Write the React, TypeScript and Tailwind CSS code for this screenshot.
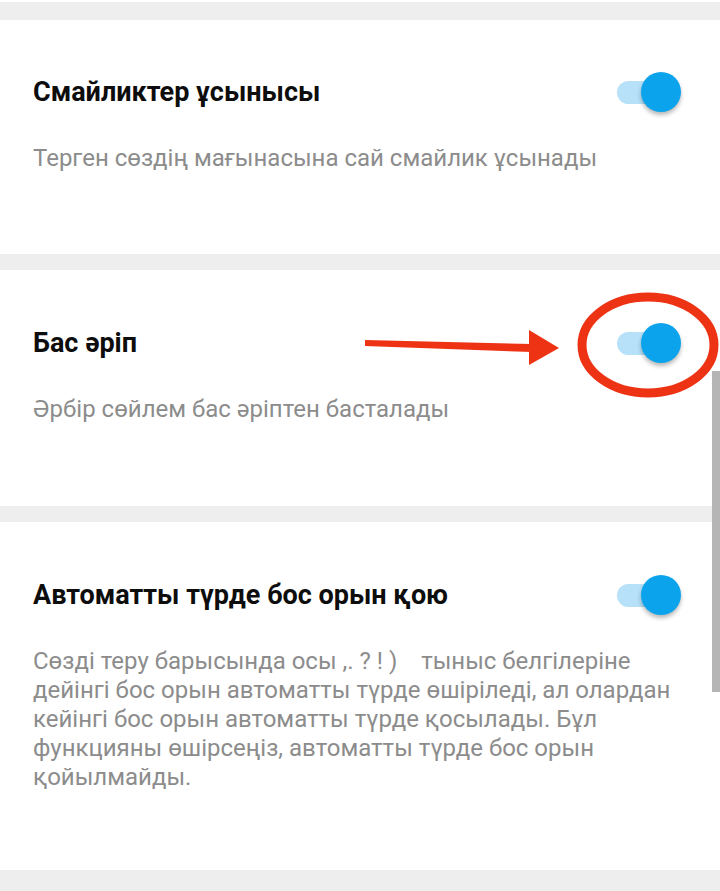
import React from 'react'

interface SettingRowProps {
  title: string;
  description: string[];
  className: string;
}

const Toggle = () => {
  return (
    <div className="relative w-[64px] h-[40px] shrink-0">
      <div className="absolute left-0 top-[9px] w-[48px] h-[23px] rounded-full bg-[#b6e1f9]" />
      <div className="absolute right-0 top-0 w-[40px] h-[40px] rounded-full bg-[#0ba4ec] shadow-[0_3px_4px_rgba(0,0,0,0.28)]" />
    </div>
  )
}

const SettingRow = ({ title, description, className }: SettingRowProps) => {
  return (
    <div className={`bg-white pl-[33px] pr-[39px] ${className}`}>
      <div className="flex items-center justify-between h-[32px]">
        <h2 className="text-[27px] leading-[32px] font-bold text-[#0d0d0d]">{title}</h2>
        <Toggle />
      </div>
      <div className="mt-[36px] text-[24px] leading-[29px] text-[#8c8c8c]">
        {description.map((line, i) => (
          <p key={i} className="whitespace-pre">{line}</p>
        ))}
      </div>
    </div>
  )
}

const App = () => {
  return (
    <div
      className="relative w-[720px] h-[891px] overflow-hidden bg-[#eeeeee] flex flex-col gap-4"
      style={{ fontFamily: 'Roboto, "Noto Sans", sans-serif' }}
    >
      <div className="h-[2px] bg-white -mb-4" />
      <div className="h-[2px]" />
      <SettingRow
        className="pt-[56px] pb-[81px]"
        title="Смайликтер ұсынысы"
        description={['Терген сөздің мағынасына сай смайлик ұсынады']}
      />
      <SettingRow
        className="pt-[57px] pb-[82px]"
        title="Бас әріп"
        description={['Әрбір сөйлем бас әріптен басталады']}
      />
      <SettingRow
        className="pt-[57px] pb-[78px]"
        title="Автоматты түрде бос орын қою"
        description={[
          'Сөзді теру барысында осы ,. ? ! )    тыныс белгілеріне',
          'дейінгі бос орын автоматты түрде өшіріледі, ал олардан',
          'кейінгі бос орын автоматты түрде қосылады. Бұл',
          'функцияны өшірсеңіз, автоматты түрде бос орын',
          'қойылмайды.',
        ]}
      />

      {/* scrollbar */}
      <div className="absolute left-[712px] top-[371px] w-[8px] h-[321px] bg-[#b5b5b5]" />

      {/* red annotation */}
      <svg className="absolute left-0 top-0" width="720" height="891" viewBox="0 0 720 891">
        <ellipse cx="648" cy="345" rx="66" ry="48" fill="none" stroke="#ee3314" strokeWidth="9" />
        <polygon points="365,340 532,344 532,352 365,346" fill="#ee3314" />
        <polygon points="529,330 559,348 529,365" fill="#ee3314" />
      </svg>
    </div>
  )
}

export default App
